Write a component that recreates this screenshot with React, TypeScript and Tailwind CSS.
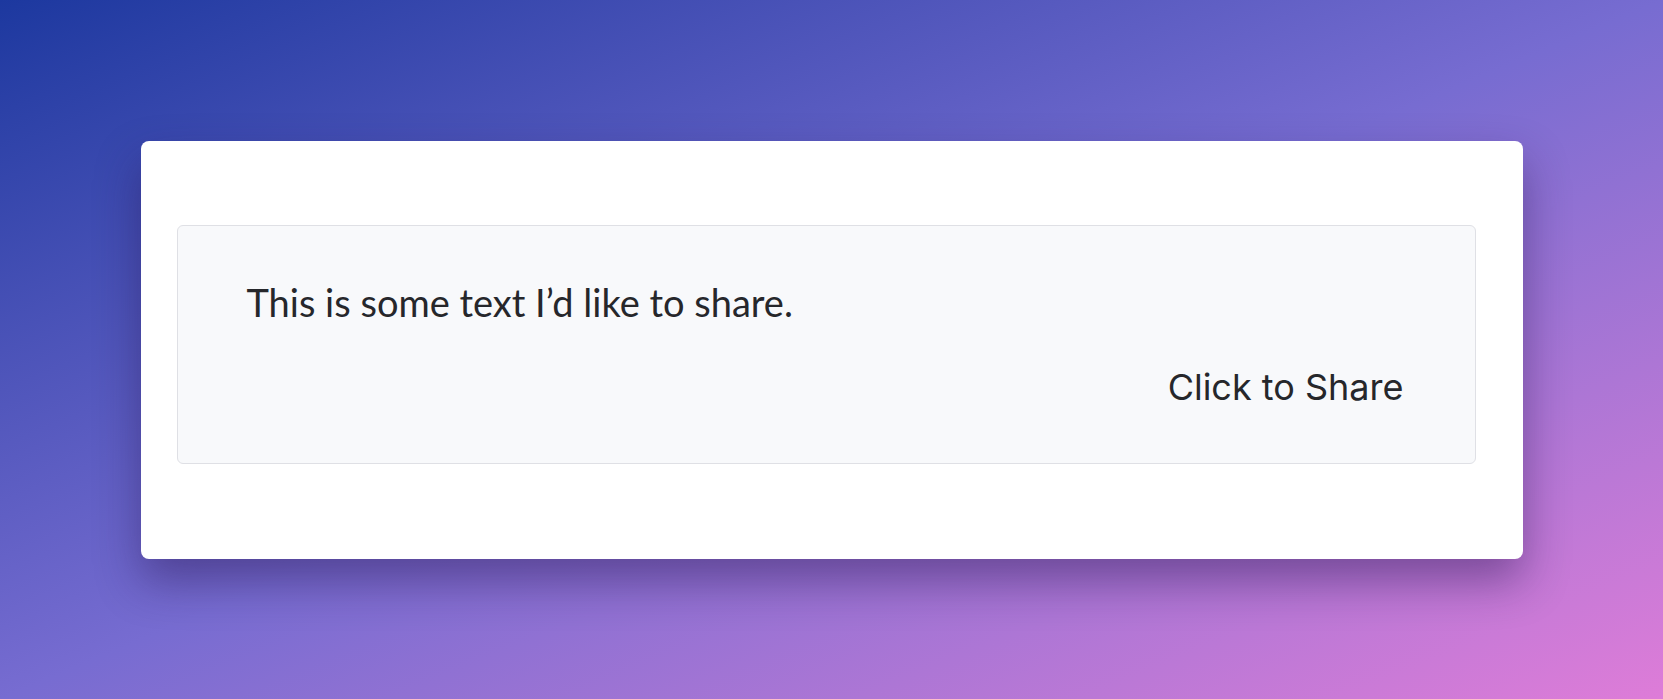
export default function App() {
  return (
    <div className="flex h-[699px] w-full items-center justify-center bg-gradient-to-br from-[#1c389f] via-[#776cd1] to-[#de7cd8]">
      <div className="flex h-[418px] w-[1382px] flex-col rounded-lg bg-white pt-[84px] pr-[47px] pb-[95px] pl-[36px] shadow-[0_22px_45px_rgba(40,20,80,0.45)]">
        <div className="flex flex-1 flex-col rounded-md border border-[#dfe0e5] bg-[#f8f9fb] pl-[69px] pr-[71px] pt-[52px]">
          <p className="text-[38px] leading-[48px] text-[#26272b] font-['Lato','Liberation_Sans',sans-serif]">
            This is some text I’d like to share.
          </p>
          <div className="mt-[37px] flex justify-end">
            <button className="text-[36px] leading-[48px] text-[#26272b] font-['Inter','Liberation_Sans',sans-serif]">
              Click to Share
            </button>
          </div>
        </div>
      </div>
    </div>
  );
}
